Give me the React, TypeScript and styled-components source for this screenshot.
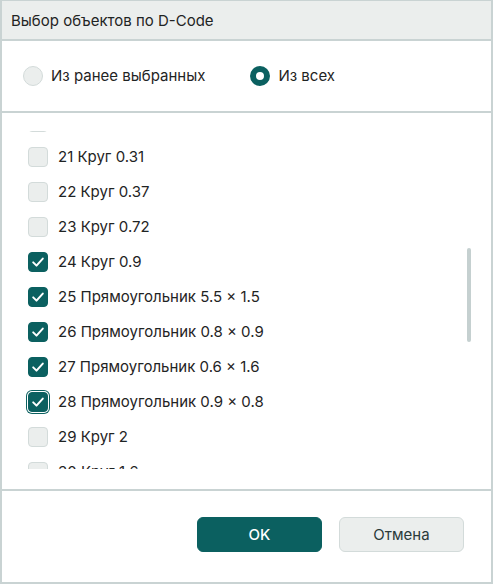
import React, { useEffect, useRef, useState } from 'react';
import styled, { createGlobalStyle } from 'styled-components';

const TEAL = '#0b6060';
const LINE = '#c9d3d3';
const SOFT = '#ebeeed';

const GlobalStyle = createGlobalStyle`
  html, body {
    margin: 0;
    padding: 0;
    background: #fff;
  }
  body {
    font-family: Inter, "Noto Sans", sans-serif;
    color: #1f2424;
  }
  * {
    box-sizing: border-box;
  }
`;

type Item = { id: number; label: string; checked: boolean };

const ITEMS: Item[] = [
  { id: 1, label: 'Круг 0.2', checked: false },
  { id: 2, label: 'Круг 0.25', checked: false },
  { id: 3, label: 'Прямоугольник 1.2 × 0.6', checked: false },
  { id: 4, label: 'Круг 0.4', checked: false },
  { id: 5, label: 'Круг 0.5', checked: false },
  { id: 6, label: 'Прямоугольник 1.5 × 1.5', checked: false },
  { id: 7, label: 'Круг 0.6', checked: false },
  { id: 8, label: 'Круг 0.8', checked: false },
  { id: 9, label: 'Круг 1', checked: false },
  { id: 10, label: 'Прямоугольник 0.6 × 0.8', checked: false },
  { id: 11, label: 'Круг 1.2', checked: false },
  { id: 12, label: 'Круг 1.4', checked: false },
  { id: 13, label: 'Прямоугольник 2 × 1', checked: false },
  { id: 14, label: 'Круг 0.15', checked: false },
  { id: 15, label: 'Круг 0.45', checked: false },
  { id: 16, label: 'Круг 0.55', checked: false },
  { id: 17, label: 'Прямоугольник 1 × 1', checked: false },
  { id: 18, label: 'Круг 0.65', checked: false },
  { id: 19, label: 'Круг 0.7', checked: false },
  { id: 20, label: 'Круг 0.3', checked: false },
  { id: 21, label: 'Круг 0.31', checked: false },
  { id: 22, label: 'Круг 0.37', checked: false },
  { id: 23, label: 'Круг 0.72', checked: false },
  { id: 24, label: 'Круг 0.9', checked: true },
  { id: 25, label: 'Прямоугольник 5.5 × 1.5', checked: true },
  { id: 26, label: 'Прямоугольник 0.8 × 0.9', checked: true },
  { id: 27, label: 'Прямоугольник 0.6 × 1.6', checked: true },
  { id: 28, label: 'Прямоугольник 0.9 × 0.8', checked: true },
  { id: 29, label: 'Круг 2', checked: false },
  { id: 30, label: 'Круг 1.6', checked: false },
  { id: 31, label: 'Круг 1.8', checked: false },
  { id: 32, label: 'Прямоугольник 2.5 × 1', checked: false },
  { id: 33, label: 'Круг 3', checked: false },
  { id: 34, label: 'Круг 2.4', checked: false },
  { id: 35, label: 'Прямоугольник 3 × 0.5', checked: false },
];

const Check = () => (
  <svg width="14" height="14" viewBox="0 0 14 14" fill="none">
    <polyline
      points="2.2,7.4 5.5,10.6 11.8,3.6"
      stroke="#fff"
      strokeWidth="2"
      strokeLinecap="round"
      strokeLinejoin="round"
    />
  </svg>
);

export default function App() {
  const [mode, setMode] = useState<'prev' | 'all'>('all');
  const [items, setItems] = useState<Item[]>(ITEMS);
  const listRef = useRef<HTMLDivElement>(null);

  useEffect(() => {
    if (listRef.current) listRef.current.scrollTop = 692;
  }, []);

  const toggle = (id: number) =>
    setItems((prev) => prev.map((it) => (it.id === id ? { ...it, checked: !it.checked } : it)));

  return (
    <>
      <GlobalStyle />
      <Dialog>
        <Header>Выбор объектов по D-Code</Header>
        <RadioRow>
          <RadioOption onClick={() => setMode('prev')}>
            <RadioDot selected={mode === 'prev'} />
            Из ранее выбранных
          </RadioOption>
          <RadioOption onClick={() => setMode('all')}>
            <RadioDot selected={mode === 'all'} />
            Из всех
          </RadioOption>
        </RadioRow>
        <ListSection>
          <ScrollArea ref={listRef}>
            {items.map((it) => (
              <Row key={it.id} onClick={() => toggle(it.id)}>
                <Box checked={it.checked} focused={it.id === 28}>
                  {it.checked && <Check />}
                </Box>
                {it.id} {it.label}
              </Row>
            ))}
          </ScrollArea>
          <Thumb />
        </ListSection>
        <Footer>
          <PrimaryButton>OK</PrimaryButton>
          <SecondaryButton>Отмена</SecondaryButton>
        </Footer>
      </Dialog>
    </>
  );
}

const Dialog = styled.div`
  width: 493px;
  height: 584px;
  border: 2px solid ${LINE};
  border-top-width: 1px;
  display: flex;
  flex-direction: column;
  background: #fff;
`;

const Header = styled.div`
  height: 40px;
  flex: none;
  display: flex;
  align-items: center;
  padding-left: 9px;
  background: ${SOFT};
  border-bottom: 2px solid ${LINE};
  font-size: 15px;
  color: #1f2424;
`;

const RadioRow = styled.div`
  height: 72px;
  flex: none;
  display: flex;
  align-items: center;
  gap: 45px;
  padding: 0 0 1px 21px;
  border-bottom: 2px solid ${LINE};
`;

const RadioOption = styled.label`
  display: flex;
  align-items: center;
  gap: 8px;
  font-size: 15px;
  color: #1f2424;
  cursor: pointer;
`;

const RadioDot = styled.span<{ selected: boolean }>`
  width: 20px;
  height: 20px;
  border-radius: 50%;
  flex: none;
  background: ${({ selected }) => (selected ? '#fff' : SOFT)};
  border: ${({ selected }) => (selected ? `6px solid ${TEAL}` : '1px solid #d3dbda')};
`;

const ListSection = styled.div`
  flex: 1;
  min-height: 0;
  position: relative;
  padding: 18px 0 20px;
  border-bottom: 2px solid ${LINE};
`;

const ScrollArea = styled.div`
  height: 100%;
  overflow-y: auto;
  scrollbar-width: none;
  &::-webkit-scrollbar {
    display: none;
  }
`;

const Row = styled.div`
  height: 35px;
  display: flex;
  align-items: center;
  gap: 10px;
  padding-left: 26px;
  font-size: 15px;
  color: #1f2424;
  cursor: pointer;
  user-select: none;
`;

const Box = styled.span<{ checked: boolean; focused?: boolean }>`
  width: 20px;
  height: 20px;
  flex: none;
  border-radius: 4px;
  display: flex;
  align-items: center;
  justify-content: center;
  background: ${({ checked }) => (checked ? TEAL : SOFT)};
  border: 1px solid ${({ checked }) => (checked ? TEAL : '#d3dbda')};
  ${({ focused }) => (focused ? `box-shadow: 0 0 0 1px #fff, 0 0 0 2px ${TEAL};` : '')}
`;

const Thumb = styled.div`
  position: absolute;
  right: 20px;
  top: 135px;
  width: 4px;
  height: 94px;
  border-radius: 2px;
  background: #c5d0d0;
`;

const Footer = styled.div`
  height: 91px;
  flex: none;
  display: flex;
  align-items: center;
  justify-content: flex-end;
  gap: 17px;
  padding: 0 27px 4px 0;
`;

const ButtonBase = styled.button`
  width: 125px;
  height: 35px;
  border-radius: 6px;
  font-family: Inter, "Noto Sans", sans-serif;
  font-size: 15px;
  cursor: pointer;
`;

const PrimaryButton = styled(ButtonBase)`
  background: ${TEAL};
  border: 1px solid ${TEAL};
  color: #fff;
  font-weight: 500;
`;

const SecondaryButton = styled(ButtonBase)`
  background: ${SOFT};
  border: 1px solid #d3dbda;
  color: #2a3a3a;
`;
